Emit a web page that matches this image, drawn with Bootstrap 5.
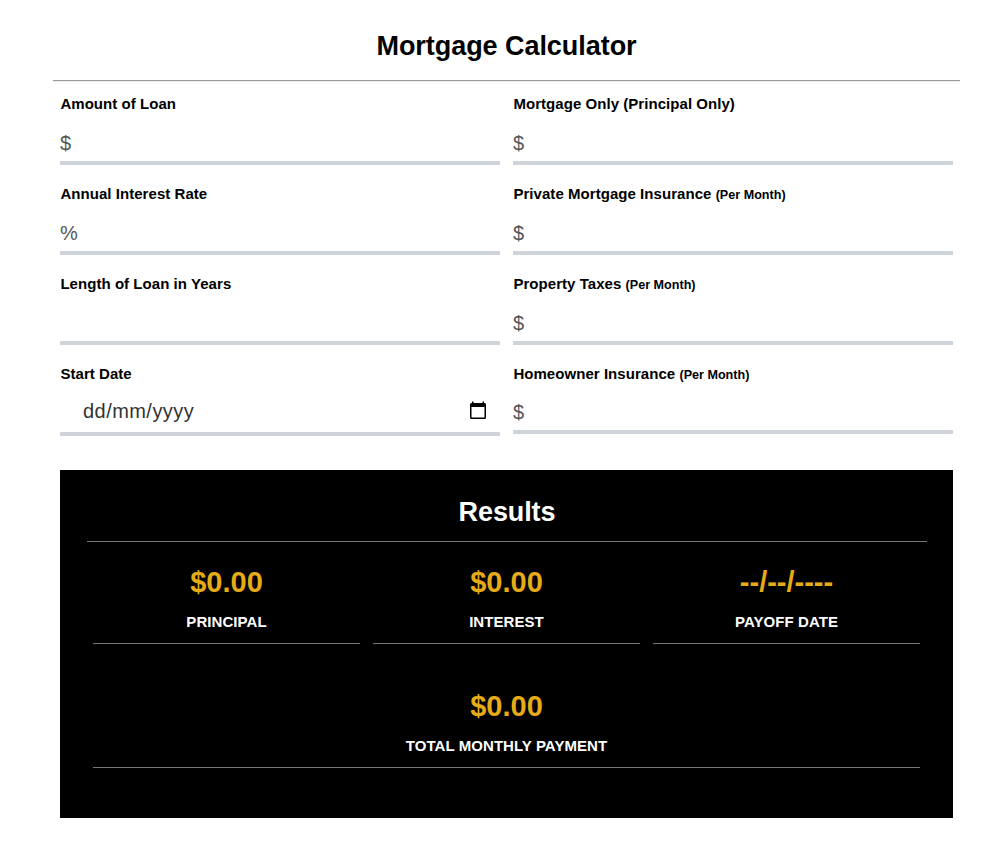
<!DOCTYPE html>
<html lang="en">
<head>
<meta charset="utf-8">
<meta name="viewport" content="width=device-width, initial-scale=1">
<title>Mortgage Calculator</title>
<link rel="stylesheet" href="https://cdn.jsdelivr.net/npm/bootstrap@5.3.0/dist/css/bootstrap.min.css">
<style>
body { font-family: "Liberation Sans", Arial, sans-serif; color: #000; background: #fff; }
.calc { width: 907px; margin-left: 53px; padding-top: 27px; }
.calc-title { font-size: 27px; line-height: 38px; letter-spacing: -.05px; margin-bottom: 15px; }
.title-rule { height: 2px; background: #999; border-bottom: 1px solid #eee; }
.fields { display: grid; grid-template-columns: 440px 440px; column-gap: 13px; padding: 13px 7px 0; height: 388px; grid-template-rows: repeat(4, 90px); }
.field-label { display: block; font-size: 15px; line-height: 18px; height: 18px; padding-left: .4px; font-weight: 700; letter-spacing: .05px; white-space: nowrap; }
.field-label small { font-size: 12.6px; letter-spacing: 0; }
.field-input, .field-date { border: 0; border-bottom: 4px solid #ced4da; border-radius: 0; padding: 0; font-size: 20px; line-height: 28px; color: #333; background: #fff; display: block; width: 100%; }
.field-input { height: 43px; margin-top: 9px; padding-top: 4px; }
.field-input::placeholder { color: #555; opacity: 1; }
.field-input.last-input { height: 42px; padding-top: 2px; }
.field-date { height: 39px; margin-top: 14px; padding: 0 13px 4px 23px; letter-spacing: .45px; }
.results { width: 893px; height: 348px; margin-left: 7px; background: #000; color: #fff; padding: 23px 26px 0 27px; }
.results-title { font-size: 27px; line-height: 38px; letter-spacing: -.1px; margin-bottom: 10px; }
.line { height: 1px; background: #777; }
.result-grid { display: grid; grid-template-columns: repeat(3, 267px); gap: 22px 13px; padding: 0 6px; }
.result { height: 102px; border-bottom: 1px solid #777; padding-top: 20px; }
.result-total { grid-column: 1 / -1; }
.amount { color: #e6ac17; font-size: 29px; line-height: 40px; }
.caption-text { font-size: 15px; line-height: 18px; letter-spacing: .07px; margin-top: 11px; }
</style>
<script src="https://cdn.jsdelivr.net/npm/bootstrap@5.3.0/dist/js/bootstrap.bundle.min.js"></script>
</head>
<body>
<main class="calc">
  <h1 class="calc-title text-center fw-bold">Mortgage Calculator</h1>
  <div class="title-rule"></div>
  <form class="fields">
    <div><label class="field-label" for="amount">Amount of Loan</label><input id="amount" class="field-input" placeholder="$"></div>
    <div><label class="field-label" for="only">Mortgage Only (Principal Only)</label><input id="only" class="field-input" placeholder="$"></div>
    <div><label class="field-label" for="rate">Annual Interest Rate</label><input id="rate" class="field-input" placeholder="%"></div>
    <div><label class="field-label" for="pmi">Private Mortgage Insurance <small>(Per Month)</small></label><input id="pmi" class="field-input" placeholder="$"></div>
    <div><label class="field-label" for="years">Length of Loan in Years</label><input id="years" class="field-input"></div>
    <div><label class="field-label" for="tax">Property Taxes <small>(Per Month)</small></label><input id="tax" class="field-input" placeholder="$"></div>
    <div><span class="field-label">Start Date</span>
      <div class="field-date d-flex justify-content-between"><span>dd/mm/yyyy</span>
        <svg class="mt-1" width="18" height="20" viewBox="0 0 18 20" aria-hidden="true"><path fill="#000" fill-rule="evenodd" d="M3 .5h1.500v1.500h9V.5H15v1.500h.5A1.500 1.500 0 0 1 17 3.500v13a1.500 1.500 0 0 1-1.500 1.500h-13A1.500 1.500 0 0 1 1 16.500v-13a1.500 1.500 0 0 1 1.500-1.500H3zM2.500 6v10.500h13V6z"/></svg>
      </div></div>
    <div><label class="field-label" for="home">Homeowner Insurance <small>(Per Month)</small></label><input id="home" class="field-input last-input" placeholder="$"></div>
  </form>
  <section class="results text-center fw-bold">
    <h2 class="results-title fw-bold">Results</h2>
    <div class="line"></div>
    <div class="result-grid">
      <div class="result"><div class="amount">$0.00</div><div class="caption-text">PRINCIPAL</div></div>
      <div class="result"><div class="amount">$0.00</div><div class="caption-text">INTEREST</div></div>
      <div class="result"><div class="amount">--/--/----</div><div class="caption-text">PAYOFF DATE</div></div>
      <div class="result result-total"><div class="amount">$0.00</div><div class="caption-text">TOTAL MONTHLY PAYMENT</div></div>
    </div>
  </section>
</main>
</body>
</html>
